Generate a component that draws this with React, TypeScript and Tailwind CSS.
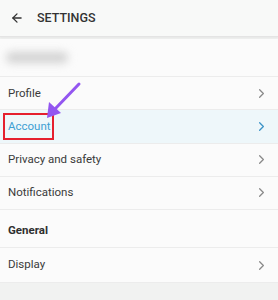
import { ArrowLeft, ChevronRight } from "lucide-react";

const items = ["Profile", "Account", "Privacy and safety", "Notifications"];

function Row({ label, active, tall }: { label: string; active?: boolean; tall?: boolean }) {
  return (
    <div
      className={`relative flex items-center justify-between border-b border-[#ececec] pl-[8px] pr-[9px] ${
        tall ? "h-[35px]" : "h-[33.25px]"
      } ${active ? "bg-[#eef7fa]" : "bg-[#fbfbfb]"}`}
    >
      <span className={`text-[11.5px] ${active ? "text-[#3d9fd3]" : "text-[#3a3a3a]"}`}>{label}</span>
      <ChevronRight
        className={`h-[15px] w-[15px] ${active ? "text-[#3b93c7]" : "text-[#8a8a8a]"}`}
        strokeWidth={2}
      />
      {active && (
        <div className="absolute left-[3px] top-[3px] h-[27px] w-[51px] border-2 border-[#e5202e]" />
      )}
    </div>
  );
}

export default function App() {
  return (
    <div className="relative h-[300px] w-[278px] overflow-hidden bg-[#f1f2f1] font-['Roboto',sans-serif]">
      {/* Header */}
      <div className="flex h-[37px] items-center gap-[13px] border-b border-[#e4e4e4] bg-[#f8f9f8] pl-[10px] shadow-[0_1px_2px_rgba(0,0,0,0.05)]">
        <ArrowLeft className="h-[14px] w-[14px] text-[#333]" strokeWidth={2.2} />
        <span className="text-[12.5px] font-medium text-[#333]">SETTINGS</span>
      </div>

      {/* Blurred user row */}
      <div className="mt-[2px] flex h-[38px] items-center border-b border-[#ececec] bg-[#fbfbfb] pl-[6px]">
        <div className="h-[11px] w-[62px] rounded-full bg-[#d2d2d2] blur-[4px]" />
      </div>

      {items.map((it) => (
        <Row key={it} label={it} active={it === "Account"} />
      ))}

      {/* General section */}
      <div className="flex h-[38px] items-center border-b border-[#ececec] bg-[#fbfbfb] pl-[8px] pt-[5px]">
        <span className="text-[11.5px] font-bold text-[#2f2f2f]">General</span>
      </div>
      <Row label="Display" tall />

      {/* Annotation arrow */}
      <svg className="absolute left-0 top-0" width="278" height="300" viewBox="0 0 278 300">
        <line x1="79" y1="84" x2="55" y2="109" stroke="#9356f0" strokeWidth="3" strokeLinecap="round" />
        <polygon points="47,118 49,102 61,113" fill="#9356f0" />
      </svg>
    </div>
  );
}
